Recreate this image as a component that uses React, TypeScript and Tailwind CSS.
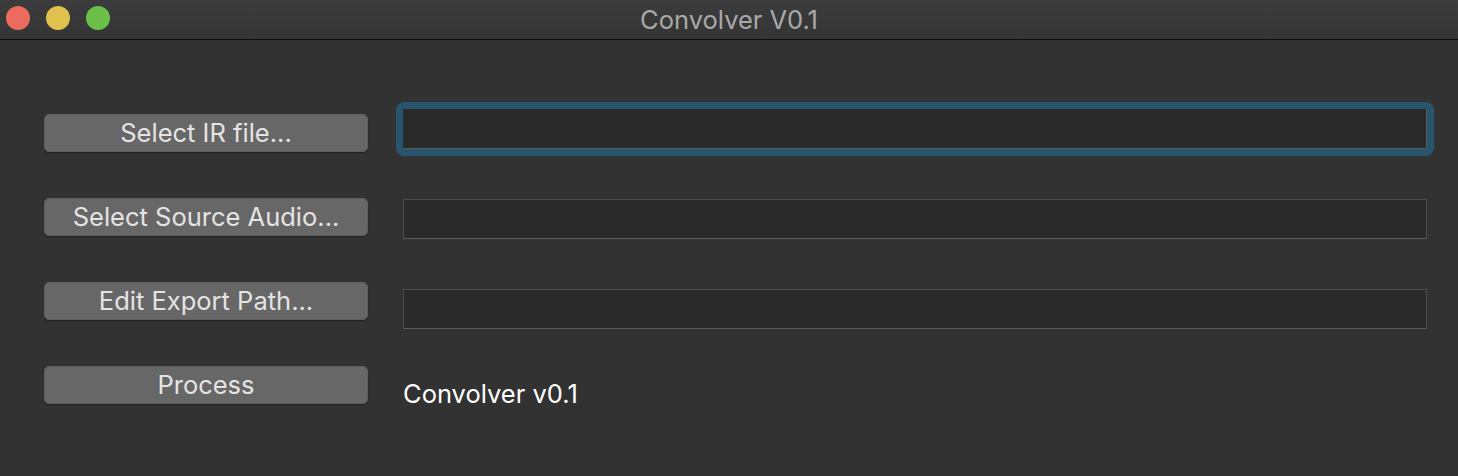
const font = { fontFamily: '"Inter", "Liberation Sans", sans-serif' };

function MacButton({ label }: { label: string }) {
  return (
    <button className="flex h-[38px] w-[324px] items-center justify-center rounded-[5px] border border-[#5e5e5e] bg-[#676767] text-[25.5px] leading-none text-[#e4e4e4] shadow-[0_1px_1px_rgba(0,0,0,0.35)]">
      {label}
    </button>
  );
}

function Field({ focused }: { focused?: boolean }) {
  if (focused) {
    return (
      <div className="-m-[7px] rounded-[8px] bg-[#28546e] p-[7px]">
        <div className="h-[40px] w-[1024px] border-r border-b border-[#5c5c5c] bg-[#2a2a2a]" />
      </div>
    );
  }
  return <div className="h-[40px] w-[1024px] border border-[#4e4e4e] border-b-[#5c5c5c] bg-[#2a2a2a]" />;
}

export default function App() {
  return (
    <div className="h-[476px] w-[1458px] overflow-hidden bg-[#323232]" style={font}>
      {/* title bar */}
      <div className="relative flex h-[40px] items-center justify-center border-b border-[#0e0e0e] bg-gradient-to-b from-[#3c3c3c] to-[#343434]">
        <div className="absolute left-[6px] top-[6px] flex gap-[16px]">
          <span className="h-[24px] w-[24px] rounded-full bg-[#ec6a5e]" />
          <span className="h-[24px] w-[24px] rounded-full bg-[#e0c14d]" />
          <span className="h-[24px] w-[24px] rounded-full bg-[#6cc04a]" />
        </div>
        <span className="text-[25.5px] leading-none text-[#a9a9a9]">Convolver V0.1</span>
      </div>

      <div className="flex">
        <div className="flex flex-col gap-[46px] pl-[44px] pt-[74px]">
          <MacButton label="Select IR file..." />
          <MacButton label="Select Source Audio..." />
          <MacButton label="Edit Export Path..." />
          <MacButton label="Process" />
        </div>
        <div className="ml-[35px] flex flex-col gap-[50px] pt-[69px]">
          <Field focused />
          <Field />
          <Field />
          <div className="mt-[1px] text-[25.5px] leading-[28px] text-white">Convolver v0.1</div>
        </div>
      </div>
    </div>
  );
}
